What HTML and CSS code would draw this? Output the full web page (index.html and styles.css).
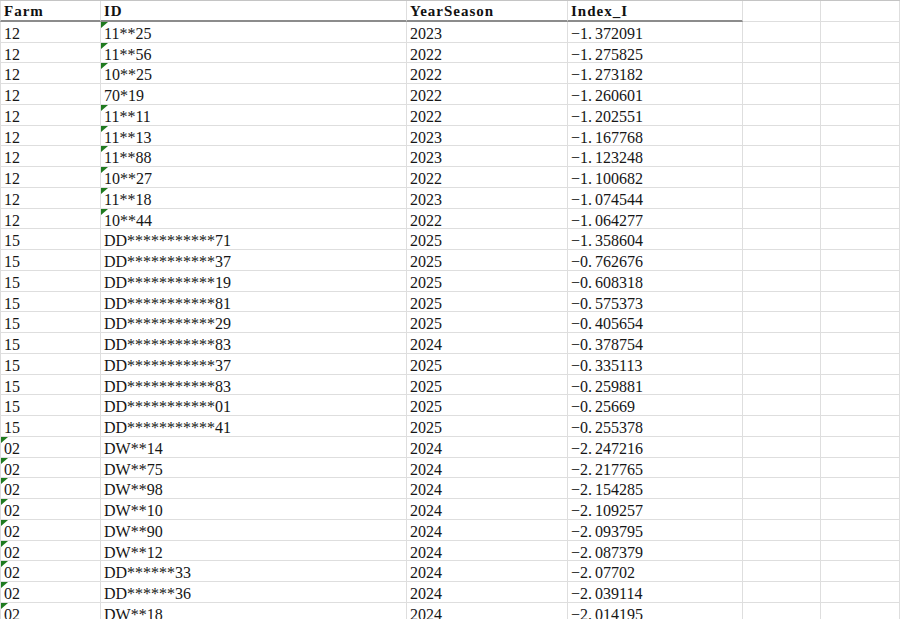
FILE: index.html
```html
<!DOCTYPE html>
<html lang="en">
<head>
<meta charset="utf-8">
<title>Sheet</title>
<link rel="stylesheet" href="styles.css">
</head>
<body>
<div class="sheet">
  <div class="row head">
    <div class="cell hd">Farm</div><div class="cell hd">ID</div><div class="cell hd">YearSeason</div><div class="cell hd">Index_I</div><div class="cell hx"></div><div class="cell hx"></div>
  </div>
  <div class="row"><div class="cell">12</div><div class="cell tri">11**25</div><div class="cell">2023</div><div class="cell">−1<span class="dot">.</span>372091</div><div class="cell"></div><div class="cell"></div></div>
  <div class="row"><div class="cell">12</div><div class="cell tri">11**56</div><div class="cell">2022</div><div class="cell">−1<span class="dot">.</span>275825</div><div class="cell"></div><div class="cell"></div></div>
  <div class="row"><div class="cell">12</div><div class="cell tri">10**25</div><div class="cell">2022</div><div class="cell">−1<span class="dot">.</span>273182</div><div class="cell"></div><div class="cell"></div></div>
  <div class="row"><div class="cell">12</div><div class="cell">70*19</div><div class="cell">2022</div><div class="cell">−1<span class="dot">.</span>260601</div><div class="cell"></div><div class="cell"></div></div>
  <div class="row"><div class="cell">12</div><div class="cell tri">11**11</div><div class="cell">2022</div><div class="cell">−1<span class="dot">.</span>202551</div><div class="cell"></div><div class="cell"></div></div>
  <div class="row"><div class="cell">12</div><div class="cell tri">11**13</div><div class="cell">2023</div><div class="cell">−1<span class="dot">.</span>167768</div><div class="cell"></div><div class="cell"></div></div>
  <div class="row"><div class="cell">12</div><div class="cell tri">11**88</div><div class="cell">2023</div><div class="cell">−1<span class="dot">.</span>123248</div><div class="cell"></div><div class="cell"></div></div>
  <div class="row"><div class="cell">12</div><div class="cell tri">10**27</div><div class="cell">2022</div><div class="cell">−1<span class="dot">.</span>100682</div><div class="cell"></div><div class="cell"></div></div>
  <div class="row"><div class="cell">12</div><div class="cell tri">11**18</div><div class="cell">2023</div><div class="cell">−1<span class="dot">.</span>074544</div><div class="cell"></div><div class="cell"></div></div>
  <div class="row"><div class="cell">12</div><div class="cell tri">10**44</div><div class="cell">2022</div><div class="cell">−1<span class="dot">.</span>064277</div><div class="cell"></div><div class="cell"></div></div>
  <div class="row"><div class="cell">15</div><div class="cell">DD***********71</div><div class="cell">2025</div><div class="cell">−1<span class="dot">.</span>358604</div><div class="cell"></div><div class="cell"></div></div>
  <div class="row"><div class="cell">15</div><div class="cell">DD***********37</div><div class="cell">2025</div><div class="cell">−0<span class="dot">.</span>762676</div><div class="cell"></div><div class="cell"></div></div>
  <div class="row"><div class="cell">15</div><div class="cell">DD***********19</div><div class="cell">2025</div><div class="cell">−0<span class="dot">.</span>608318</div><div class="cell"></div><div class="cell"></div></div>
  <div class="row"><div class="cell">15</div><div class="cell">DD***********81</div><div class="cell">2025</div><div class="cell">−0<span class="dot">.</span>575373</div><div class="cell"></div><div class="cell"></div></div>
  <div class="row"><div class="cell">15</div><div class="cell">DD***********29</div><div class="cell">2025</div><div class="cell">−0<span class="dot">.</span>405654</div><div class="cell"></div><div class="cell"></div></div>
  <div class="row"><div class="cell">15</div><div class="cell">DD***********83</div><div class="cell">2024</div><div class="cell">−0<span class="dot">.</span>378754</div><div class="cell"></div><div class="cell"></div></div>
  <div class="row"><div class="cell">15</div><div class="cell">DD***********37</div><div class="cell">2025</div><div class="cell">−0<span class="dot">.</span>335113</div><div class="cell"></div><div class="cell"></div></div>
  <div class="row"><div class="cell">15</div><div class="cell">DD***********83</div><div class="cell">2025</div><div class="cell">−0<span class="dot">.</span>259881</div><div class="cell"></div><div class="cell"></div></div>
  <div class="row"><div class="cell">15</div><div class="cell">DD***********01</div><div class="cell">2025</div><div class="cell">−0<span class="dot">.</span>25669</div><div class="cell"></div><div class="cell"></div></div>
  <div class="row"><div class="cell">15</div><div class="cell">DD***********41</div><div class="cell">2025</div><div class="cell">−0<span class="dot">.</span>255378</div><div class="cell"></div><div class="cell"></div></div>
  <div class="row"><div class="cell tri">02</div><div class="cell">DW**14</div><div class="cell">2024</div><div class="cell">−2<span class="dot">.</span>247216</div><div class="cell"></div><div class="cell"></div></div>
  <div class="row"><div class="cell tri">02</div><div class="cell">DW**75</div><div class="cell">2024</div><div class="cell">−2<span class="dot">.</span>217765</div><div class="cell"></div><div class="cell"></div></div>
  <div class="row"><div class="cell tri">02</div><div class="cell">DW**98</div><div class="cell">2024</div><div class="cell">−2<span class="dot">.</span>154285</div><div class="cell"></div><div class="cell"></div></div>
  <div class="row"><div class="cell tri">02</div><div class="cell">DW**10</div><div class="cell">2024</div><div class="cell">−2<span class="dot">.</span>109257</div><div class="cell"></div><div class="cell"></div></div>
  <div class="row"><div class="cell tri">02</div><div class="cell">DW**90</div><div class="cell">2024</div><div class="cell">−2<span class="dot">.</span>093795</div><div class="cell"></div><div class="cell"></div></div>
  <div class="row"><div class="cell tri">02</div><div class="cell">DW**12</div><div class="cell">2024</div><div class="cell">−2<span class="dot">.</span>087379</div><div class="cell"></div><div class="cell"></div></div>
  <div class="row"><div class="cell tri">02</div><div class="cell">DD******33</div><div class="cell">2024</div><div class="cell">−2<span class="dot">.</span>07702</div><div class="cell"></div><div class="cell"></div></div>
  <div class="row"><div class="cell tri">02</div><div class="cell">DD******36</div><div class="cell">2024</div><div class="cell">−2<span class="dot">.</span>039114</div><div class="cell"></div><div class="cell"></div></div>
  <div class="row"><div class="cell tri">02</div><div class="cell">DW**18</div><div class="cell">2024</div><div class="cell">−2<span class="dot">.</span>014195</div><div class="cell"></div><div class="cell"></div></div>
</div>
</body>
</html>
```
FILE: styles.css
```css
html, body {
  margin: 0;
  padding: 0;
  overflow: hidden;
  background: #ffffff;
}
.sheet {
  display: flex;
  flex-direction: column;
  width: 900px;
  border-top: 1px solid #c4c4c4;
  font-family: "Liberation Serif", "Times New Roman", serif;
  font-size: 16px;
  color: #161616;
}
.row {
  display: grid;
  grid-template-columns: 101px 306px 161px 175px 78px 79px;
  height: 20.75px;
  flex: none;
}
.cell {
  position: relative;
  box-sizing: border-box;
  border-right: 1px solid #dedede;
  border-bottom: 1px solid #dedede;
  padding-left: 3px;
  line-height: 23px;
  white-space: nowrap;
  overflow: hidden;
}
.cell:first-child {
  border-left: 1px solid #dcdcdc;
  padding-left: 3px;
}
.hd {
  border-bottom: 2px solid #8c8c8c;
  font-weight: bold;
  font-size: 15px;
  letter-spacing: 1px;
  color: #111111;
  line-height: 21px;
}
.hx {
  border-bottom: 1px solid #dedede;
}
.dot {
  margin-right: 3px;
}
.tri::before {
  content: "";
  position: absolute;
  left: 0;
  top: 0;
  width: 0;
  height: 0;
  border-top: 6px solid #1f7a1f;
  border-right: 7px solid transparent;
}
```
